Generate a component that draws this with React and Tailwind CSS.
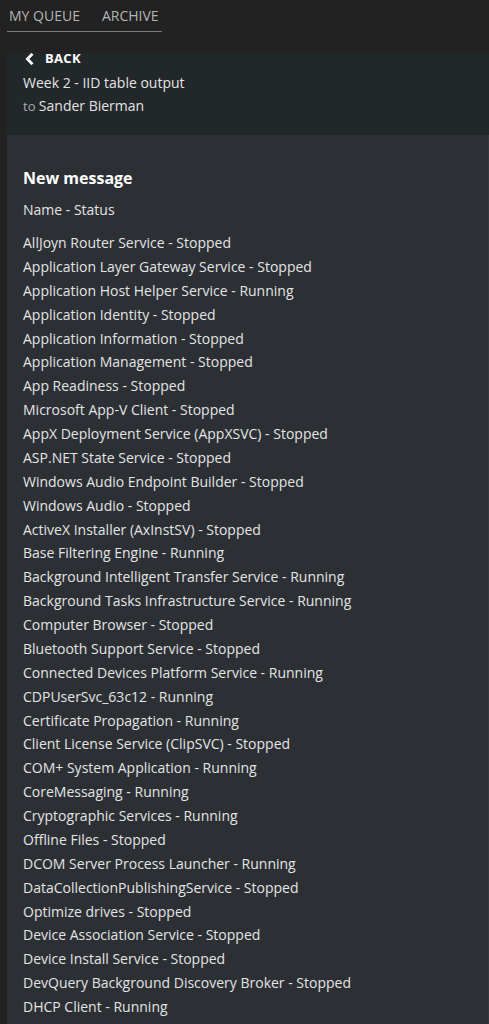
const items = [
  "AllJoyn Router Service - Stopped",
  "Application Layer Gateway Service - Stopped",
  "Application Host Helper Service - Running",
  "Application Identity - Stopped",
  "Application Information - Stopped",
  "Application Management - Stopped",
  "App Readiness - Stopped",
  "Microsoft App-V Client - Stopped",
  "AppX Deployment Service (AppXSVC) - Stopped",
  "ASP.NET State Service - Stopped",
  "Windows Audio Endpoint Builder - Stopped",
  "Windows Audio - Stopped",
  "ActiveX Installer (AxInstSV) - Stopped",
  "Base Filtering Engine - Running",
  "Background Intelligent Transfer Service - Running",
  "Background Tasks Infrastructure Service - Running",
  "Computer Browser - Stopped",
  "Bluetooth Support Service - Stopped",
  "Connected Devices Platform Service - Running",
  "CDPUserSvc_63c12 - Running",
  "Certificate Propagation - Running",
  "Client License Service (ClipSVC) - Stopped",
  "COM+ System Application - Running",
  "CoreMessaging - Running",
  "Cryptographic Services - Running",
  "Offline Files - Stopped",
  "DCOM Server Process Launcher - Running",
  "DataCollectionPublishingService - Stopped",
  "Optimize drives - Stopped",
  "Device Association Service - Stopped",
  "Device Install Service - Stopped",
  "DevQuery Background Discovery Broker - Stopped",
  "DHCP Client - Running",
];

export default function App() {
  return (
    <div
      className="w-[489px] h-[1024px] overflow-hidden bg-[#222222] text-[14px] text-[#e4e4e4]"
      style={{ fontFamily: '"Open Sans", sans-serif' }}
    >
      <div className="pl-[7px] h-[53px]">
        <div className="flex w-[155px] border-b border-[#7a7a7a] h-[32px] items-center pl-[2px] gap-[22px] text-[#b4b4b4] leading-none pt-[1px]">
          <span>MY QUEUE</span>
          <span>ARCHIVE</span>
        </div>
      </div>
      <div className="ml-[7px] bg-[#22272a] h-[82px] pl-[16px]">
        <div className="flex items-center h-[13px] leading-none text-[13px] font-bold text-white tracking-[0.3px] -translate-y-[1px]">
          <svg width="9" height="12" viewBox="0 0 9 12" className="ml-[2px] mr-[11px]">
            <path d="M6.5 1.8 L2.4 6 L6.5 10.2" fill="none" stroke="white" strokeWidth="2.8" strokeLinecap="square" />
          </svg>
          <span>BACK</span>
        </div>
        <div className="leading-[24px] mt-[5px]">Week 2 - IID table output</div>
        <div className="leading-[24px] -mt-[1px]">
          <span className="text-[13px] text-[#a9acae]">to </span>Sander Bierman
        </div>
      </div>
      <div className="ml-[7px] bg-[#2c3035] h-[889px] pl-[16px] pt-[31px] border-r border-[#33373c]">
        <div className="text-[16px] font-bold leading-[24px] text-white">New message</div>
        <div className="leading-[24px] mt-[8px]">Name - Status</div>
        <div className="mt-[9px] leading-[23.875px]">
          {items.map((t) => (
            <div key={t}>{t}</div>
          ))}
        </div>
      </div>
    </div>
  );
}
